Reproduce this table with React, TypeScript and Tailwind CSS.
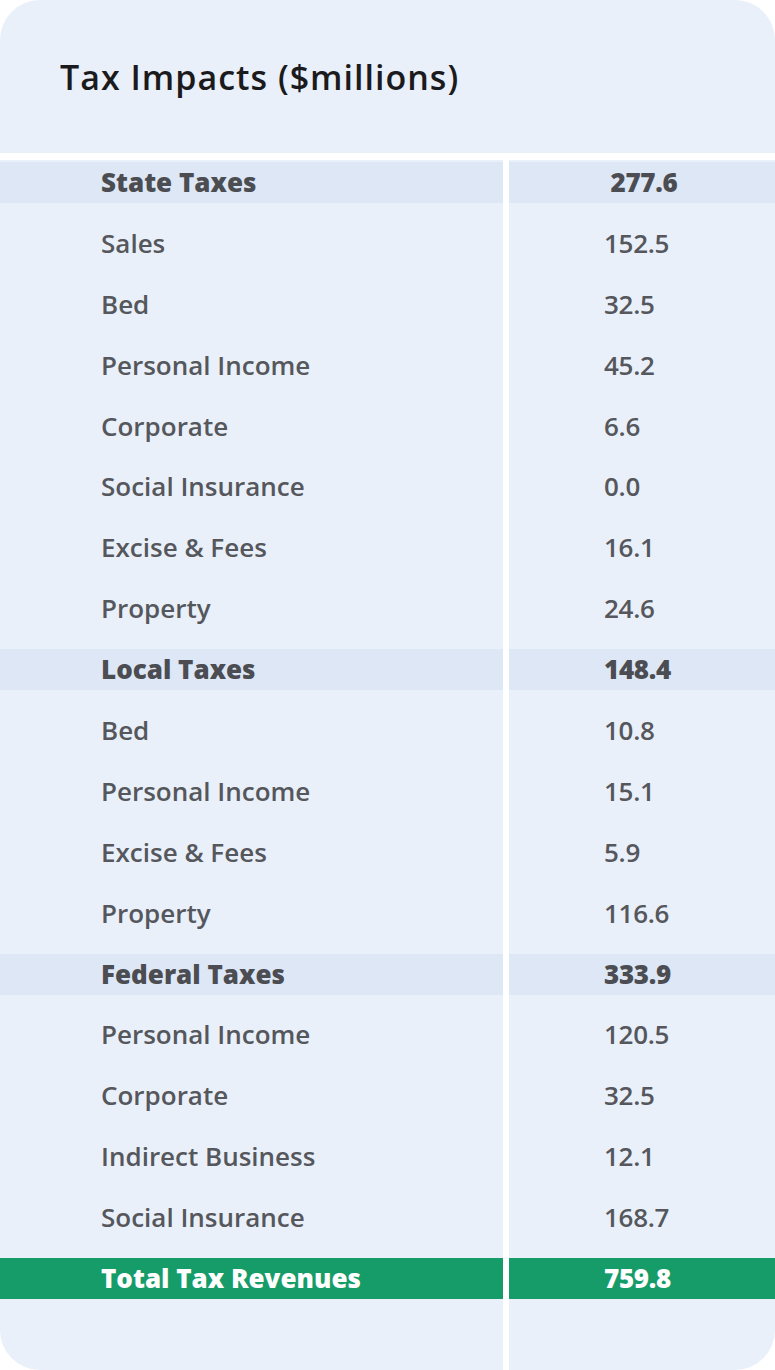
import React from 'react';

type Row = { label: string; value: string; kind: 'head' | 'item' | 'total' };

const rows: Row[] = [
  { label: 'State Taxes', value: ' 277.6', kind: 'head' },
  { label: 'Sales', value: '152.5', kind: 'item' },
  { label: 'Bed', value: '32.5', kind: 'item' },
  { label: 'Personal Income', value: '45.2', kind: 'item' },
  { label: 'Corporate', value: '6.6', kind: 'item' },
  { label: 'Social Insurance', value: '0.0', kind: 'item' },
  { label: 'Excise & Fees', value: '16.1', kind: 'item' },
  { label: 'Property', value: '24.6', kind: 'item' },
  { label: 'Local Taxes', value: '148.4', kind: 'head' },
  { label: 'Bed', value: '10.8', kind: 'item' },
  { label: 'Personal Income', value: '15.1', kind: 'item' },
  { label: 'Excise & Fees', value: '5.9', kind: 'item' },
  { label: 'Property', value: '116.6', kind: 'item' },
  { label: 'Federal Taxes', value: '333.9', kind: 'head' },
  { label: 'Personal Income', value: '120.5', kind: 'item' },
  { label: 'Corporate', value: '32.5', kind: 'item' },
  { label: 'Indirect Business', value: '12.1', kind: 'item' },
  { label: 'Social Insurance', value: '168.7', kind: 'item' },
  { label: 'Total Tax Revenues', value: '759.8', kind: 'total' },
];

function TableRow({ row }: { row: Row }) {
  const band =
    row.kind === 'head'
      ? 'bg-[#dde7f5] text-[#4b4d52] font-extrabold'
      : row.kind === 'total'
      ? 'bg-[#169c68] text-white font-extrabold'
      : 'text-[#55575c] font-semibold';

  return (
    <div className="flex h-[60.9px]">
      <div className="w-[503px]">
        <div className={`mt-[2px] h-[41px] flex items-center pl-[101px] ${band}`}>
          {row.label}
        </div>
      </div>
      <div className="w-[6px] bg-white" />
      <div className="flex-1">
        <div className={`mt-[2px] h-[41px] flex items-center pl-[95px] whitespace-pre tracking-[-0.3px] ${band}`}>
          {row.value}
        </div>
      </div>
    </div>
  );
}

export default function App() {
  return (
    <div className="bg-white min-h-screen" style={{ fontFamily: '"Open Sans", Lato, sans-serif' }}>
      <div className="h-[1370px] rounded-[40px] bg-[#e9f0fa] overflow-hidden flex flex-col">
        {/* Title */}
        <div className="h-[153px] flex items-center pl-[60px] pt-[2px]">
          <h1 className="text-[34px] font-semibold text-[#1b1b1d] tracking-[1px]">
            Tax Impacts ($millions)
          </h1>
        </div>
        <div className="h-[7px] bg-white" />

        {/* Table */}
        <div className="flex-1 flex flex-col text-[26px]">
          {rows.map((row, i) => (
            <TableRow key={i} row={row} />
          ))}
          <div className="flex flex-1">
            <div className="w-[503px]" />
            <div className="w-[6px] bg-white" />
            <div className="flex-1" />
          </div>
        </div>
      </div>
    </div>
  );
}
